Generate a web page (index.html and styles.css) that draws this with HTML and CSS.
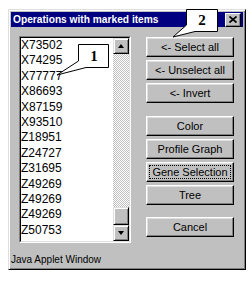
FILE: index.html
```html
<!DOCTYPE html>
<html lang="en">
  <head>
    <meta charset="UTF-8" />
    <title>Operations with marked items</title>
    <link rel="stylesheet" href="styles.css">
  </head>
  <body>
    <div class="window">
      <div class="titlebar">
        <span>Operations with marked items</span>
        <span class="close">
          <svg width="8" height="7" viewBox="0 0 8 7"><path d="M0.5 0.5 L7.5 6.5 M7.5 0.5 L0.5 6.5" stroke="#000" stroke-width="1.7"/></svg>
        </span>
      </div>

      <div class="content">
        <div class="listbox">
          <div class="listbox-inner">
            <ul class="items">
              <li>X73502</li>
              <li>X74295</li>
              <li>X77777</li>
              <li>X86693</li>
              <li>X87159</li>
              <li>X93510</li>
              <li>Z18951</li>
              <li>Z24727</li>
              <li>Z31695</li>
              <li>Z49269</li>
              <li>Z49269</li>
              <li>Z49269</li>
              <li>Z50753</li>
            </ul>
            <div class="scrollbar">
              <div class="sb-btn"><span class="arrow up"></span></div>
              <div class="track"></div>
              <div class="thumb"></div>
              <div class="sb-btn"><span class="arrow down"></span></div>
            </div>
          </div>
        </div>

        <div class="buttons">
          <button class="btn">&lt;- Select all</button>
          <button class="btn">&lt;- Unselect all</button>
          <button class="btn">&lt;- Invert</button>
          <button class="btn group">Color</button>
          <button class="btn">Profile Graph</button>
          <button class="btn focused">Gene Selection</button>
          <button class="btn">Tree</button>
          <button class="btn cancel">Cancel</button>
        </div>
      </div>

      <div class="status">Java Applet Window</div>
    </div>

    <svg class="callouts" width="252" height="281">
      <path d="M78.5 44.5 H108.5 V67.5 H86 L57 75 L78.5 61 Z" fill="#fff" stroke="#000" />
      <text x="94" y="61" text-anchor="middle">1</text>
      <path d="M186.5 9.5 H217.5 V31.5 H195 L173 37 L186.5 25 Z" fill="#fff" stroke="#000" />
      <text x="202" y="25" text-anchor="middle">2</text>
    </svg>
  </body>
</html>
```

FILE: styles.css
```css
body {
  margin: 0;
  background: #fff;
  font-family: "Liberation Sans", Arial, sans-serif;
}

.window {
  display: flex;
  flex-direction: column;
  box-sizing: border-box;
  width: 238px;
  height: 261px;
  margin: 9px 0 0 8px;
  padding: 2px;
  border: 1px solid;
  border-color: #dfdfdf #000 #000 #dfdfdf;
  background: #c0c0c0;
  box-shadow: inset 1px 1px #fff, inset -1px -1px #808080;
}

.titlebar {
  display: flex;
  justify-content: space-between;
  align-items: center;
  height: 15px;
  padding: 0 2px;
  background: #000080;
  color: #fff;
  font-size: 10.2px;
  font-weight: bold;
}

.close {
  display: flex;
  justify-content: center;
  align-items: center;
  box-sizing: border-box;
  width: 16px;
  height: 14px;
  background: #c0c0c0;
  border: 1px solid;
  border-color: #fff #000 #000 #fff;
  box-shadow: inset -1px -1px #808080;
}

.content {
  display: flex;
  gap: 15px;
  padding: 9px 9px 0 8px;
}

.listbox {
  box-sizing: border-box;
  width: 112px;
  height: 207px;
  border: 1px solid;
  border-color: #808080 #fff #fff #808080;
}

.listbox-inner {
  display: flex;
  height: 100%;
  box-sizing: border-box;
  border: 1px solid;
  border-color: #000 #dfdfdf #dfdfdf #000;
  background: #fff;
}

.items {
  flex: 1;
  margin: 0;
  padding: 0;
  list-style: none;
  overflow: hidden;
  font-size: 12px;
  line-height: 15.4px;
  color: #000;
}

.scrollbar {
  display: flex;
  flex-direction: column;
  width: 16px;
}

.sb-btn,
.thumb {
  box-sizing: border-box;
  background: #c0c0c0;
  border: 1px solid;
  border-color: #dfdfdf #000 #000 #dfdfdf;
  box-shadow: inset 1px 1px #fff, inset -1px -1px #808080;
}

.sb-btn {
  display: flex;
  justify-content: center;
  align-items: center;
  height: 16px;
}

.thumb {
  height: 18px;
}

.track {
  flex: 1;
  background: repeating-conic-gradient(#c0c0c0 0 25%, #fff 0 50%) 0 0 / 2px 2px;
}

.arrow {
  width: 0;
  height: 0;
  border-left: 3.5px solid transparent;
  border-right: 3.5px solid transparent;
}

.arrow.up {
  border-bottom: 4px solid #000;
}

.arrow.down {
  border-top: 4px solid #000;
}

.buttons {
  display: flex;
  flex-direction: column;
  gap: 3px;
  width: 88px;
  margin-top: 1px;
}

.btn {
  box-sizing: border-box;
  height: 20px;
  padding: 0;
  background: #c0c0c0;
  border: 1px solid;
  border-color: #fff #000 #000 #fff;
  box-shadow: inset -1px -1px #808080, inset 1px 1px #dfdfdf;
  color: #000;
  font-family: "Liberation Sans", Arial, sans-serif;
  font-size: 11px;
}

.btn.group {
  margin-top: 10px;
}

.btn.cancel {
  margin-top: 9px;
}

.btn.focused {
  outline: 1px dotted #000;
  outline-offset: -4px;
}

.status {
  margin-top: 11px;
  font-size: 10px;
  line-height: 12px;
  color: #000;
}

.callouts {
  position: absolute;
  top: 0;
  left: 0;
  pointer-events: none;
}

.callouts text {
  font-family: "Liberation Serif", serif;
  font-weight: bold;
  font-size: 15px;
}
```
